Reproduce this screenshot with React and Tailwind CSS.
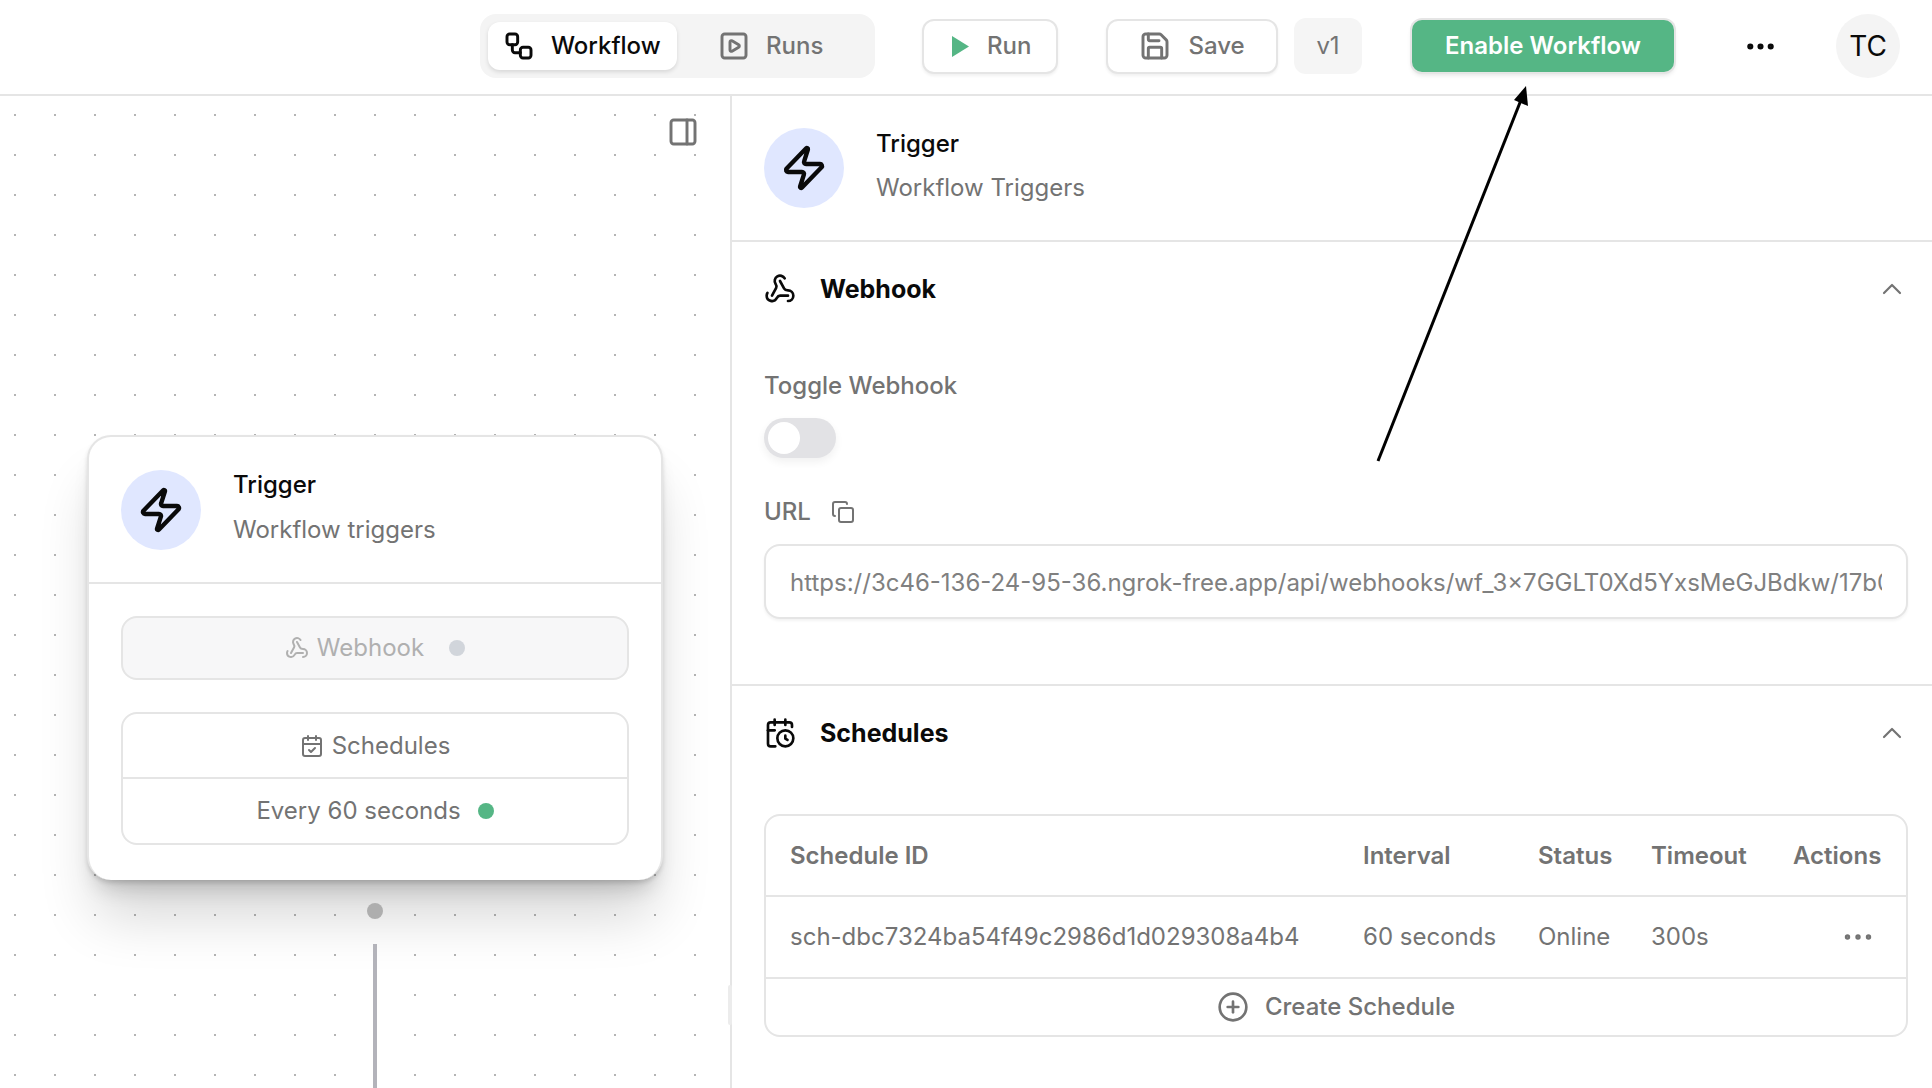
import React from 'react';
import {
  Workflow,
  SquarePlay,
  Save,
  Ellipsis,
  PanelRight,
  Zap,
  Webhook,
  ChevronUp,
  Copy,
  CalendarClock,
  CalendarCheck,
  CirclePlus,
} from 'lucide-react';

const webhookUrl = 'https://3c46-136-24-95-36.ngrok-free.app/api/webhooks/wf_3x7GGLT0Xd5YxsMeGJBdkw/17b0c94e2a7d4f18b6e3';

function Header() {
  return (
    <header className="h-[96px] shrink-0 border-b-2 border-[#e5e5e5] flex items-center justify-end pr-[32px] pb-[2px] text-[24px] font-medium">
      <div className="flex items-center h-[64px] w-[395px] rounded-[16px] bg-[#f4f4f4] px-[8px]">
        <div className="flex items-center h-[48px] w-[189px] pl-[15px] rounded-[12px] bg-white shadow-[0_2px_4px_rgba(0,0,0,0.12)] text-[#0a0a0a]">
          <Workflow size={32} strokeWidth={2.2} />
          <span className="ml-[16px]">Workflow</span>
        </div>
        <div className="flex items-center ml-[41px] text-[#737373]">
          <SquarePlay size={32} strokeWidth={2.2} />
          <span className="ml-[16px]">Runs</span>
        </div>
      </div>
      <button className="ml-[47px] flex items-center pl-[28px] h-[55px] w-[136px] rounded-[12px] border-2 border-[#e5e5e5] bg-white shadow-[0_2px_3px_rgba(0,0,0,0.06)] text-[#737373]">
        <svg width="17" height="21" viewBox="0 0 17 21" className="mr-[18px]">
          <path d="M0 0 L17 10.5 L0 21 Z" fill="#55b685" />
        </svg>
        Run
      </button>
      <button className="ml-[48px] flex items-center justify-center h-[55px] w-[172px] rounded-[12px] border-2 border-[#e5e5e5] bg-white shadow-[0_2px_3px_rgba(0,0,0,0.06)] text-[#737373]">
        <Save size={32} strokeWidth={2.2} className="mr-[17px]" />
        Save
      </button>
      <div className="ml-[16px] flex items-center justify-center h-[56px] w-[68px] rounded-[12px] bg-[#f5f5f5] text-[#737373] font-normal">
        v1
      </div>
      <button className="ml-[50px] flex items-center justify-center h-[52px] w-[262px] rounded-[10px] bg-[#55b685] text-white font-semibold shadow-[0_0_0_2px_#e5e5e5,0_3px_5px_rgba(0,0,0,0.12)]">
        Enable Workflow
      </button>
      <Ellipsis size={35} strokeWidth={2.2} className="ml-[69px] text-[#0a0a0a]" />
      <div className="ml-[58px] flex items-center justify-center w-[64px] h-[64px] rounded-full bg-[#f4f4f4] text-[28px] font-normal text-[#0a0a0a]">
        TC
      </div>
    </header>
  );
}

function TriggerCard() {
  return (
    <div className="absolute left-[87px] top-[339px] w-[576px] h-[445px] rounded-[24px] border-2 border-[#e5e5e5] border-b-0 bg-white shadow-[0_44px_56px_-8px_rgba(0,0,0,0.16),0_16px_22px_-10px_rgba(0,0,0,0.2),0_3px_4px_rgba(0,0,0,0.12)] text-[24px] text-[#737373]">
      <div className="flex items-center h-[147px] pl-[32px] border-b-2 border-[#e5e5e5]">
        <div className="w-[80px] h-[80px] rounded-full bg-[#e0e7ff] flex items-center justify-center text-[#0a0a0a]">
          <Zap size={48} strokeWidth={2.2} />
        </div>
        <div className="ml-[32px] pb-[4px]">
          <div className="leading-[32px] text-[#0a0a0a] font-medium">Trigger</div>
          <div className="leading-[32px] mt-[13px]">Workflow triggers</div>
        </div>
      </div>
      <div className="px-[32px] pt-[32px]">
        <div className="h-[64px] flex items-center justify-center rounded-[16px] border-2 border-[#e5e5e5] bg-[#f7f7f8] text-[#b0b0b0]">
          <Webhook size={24} strokeWidth={2} />
          <span className="ml-[8px]">Webhook</span>
          <span className="ml-[25px] w-[16px] h-[16px] rounded-full bg-[#d1d5db]" />
        </div>
        <div className="mt-[32px] rounded-[16px] border-2 border-[#e5e5e5]">
          <div className="h-[65px] flex items-center justify-center border-b-2 border-[#e5e5e5]">
            <CalendarCheck size={24} strokeWidth={2} />
            <span className="ml-[8px]">Schedules</span>
          </div>
          <div className="h-[64px] flex items-center justify-center">
            <span>Every 60 seconds</span>
            <span className="ml-[17px] w-[16px] h-[16px] rounded-full bg-[#55b685]" />
          </div>
        </div>
      </div>
    </div>
  );
}

function Canvas() {
  return (
    <div className="relative w-[732px] shrink-0 border-r-2 border-[#e5e5e5] bg-white bg-[radial-gradient(circle,#b4b4b4_1px,transparent_1.5px)] bg-[size:40px_40px] bg-[position:-5px_-1px]">
      <PanelRight size={32} strokeWidth={2.2} className="absolute left-[667px] top-[20px] text-[#737373]" />
      <TriggerCard />
      <div className="absolute left-[367px] top-[807px] w-[16px] h-[16px] rounded-full bg-[#aeaeae]" />
      <div className="absolute left-[373px] top-[848px] bottom-0 w-[4px] bg-[#b3b3ba]" />
      <div className="absolute left-[728px] top-[889px] w-[4px] h-[40px] rounded-full bg-[#ececec]" />
    </div>
  );
}

function SectionTitle({ icon: Icon, title }) {
  return (
    <div className="h-[94px] flex items-center text-[#0a0a0a]">
      <Icon size={32} strokeWidth={2} />
      <span className="ml-[24px] pt-[2px] text-[25px] font-bold">{title}</span>
      <ChevronUp size={32} strokeWidth={1.6} className="ml-auto text-[#737373]" />
    </div>
  );
}

function ScheduleTable() {
  const cols = 'grid grid-cols-[573px_175px_113px_142px_1fr] items-center pl-[24px]';
  return (
    <div className="h-[223px] rounded-[16px] border-2 border-[#e5e5e5] text-[24px] text-[#737373] flex flex-col">
      <div className={`${cols} h-[81px] border-b-2 border-[#e5e5e5] font-semibold`}>
        <span>Schedule ID</span>
        <span>Interval</span>
        <span>Status</span>
        <span>Timeout</span>
        <span>Actions</span>
      </div>
      <div className={`${cols} h-[82px] border-b-2 border-[#e5e5e5]`}>
        <span>sch-dbc7324ba54f49c2986d1d029308a4b4</span>
        <span>60 seconds</span>
        <span>Online</span>
        <span>300s</span>
        <span className="flex justify-end pr-[30px]">
          <Ellipsis size={36} strokeWidth={1.6} />
        </span>
      </div>
      <div className="flex-1 flex items-center justify-center font-medium">
        <CirclePlus size={32} strokeWidth={2} />
        <span className="ml-[16px]">Create Schedule</span>
      </div>
    </div>
  );
}

function Inspector() {
  return (
    <div className="flex-1 min-w-0 text-[24px] text-[#737373]">
      <div className="h-[146px] flex items-center pl-[32px] border-b-2 border-[#e5e5e5]">
        <div className="w-[80px] h-[80px] rounded-full bg-[#e0e7ff] flex items-center justify-center text-[#0a0a0a]">
          <Zap size={48} strokeWidth={2.2} />
        </div>
        <div className="ml-[32px] pb-[5px]">
          <div className="leading-[32px] text-[#0a0a0a] font-medium">Trigger</div>
          <div className="leading-[32px] mt-[12px]">Workflow Triggers</div>
        </div>
      </div>
      <div className="h-[444px] pl-[32px] pr-[24px] border-b-2 border-[#e5e5e5]">
        <SectionTitle icon={Webhook} title="Webhook" />
        <div className="mt-[34px] leading-[32px] font-medium">Toggle Webhook</div>
        <div className="mt-[16px] w-[72px] h-[40px] rounded-full bg-[#e2e2e5] p-[4px] shadow-[0_4px_8px_rgba(0,0,0,0.06)]">
          <div className="w-[32px] h-[32px] rounded-full bg-white" />
        </div>
        <div className="mt-[38px] flex items-center h-[32px] font-medium">
          URL
          <Copy size={24} strokeWidth={2} className="ml-[20px]" />
        </div>
        <input
          readOnly
          value={webhookUrl}
          className="mt-[16px] w-full h-[75px] rounded-[16px] border-2 border-[#e5e5e5] bg-white pl-[24px] pr-[24px] pt-[2px] text-[24px] text-[#808080] shadow-[0_2px_3px_rgba(0,0,0,0.05)] outline-none"
        />
      </div>
      <div className="pl-[32px] pr-[24px]">
        <SectionTitle icon={CalendarClock} title="Schedules" />
        <div className="mt-[34px]">
          <ScheduleTable />
        </div>
      </div>
    </div>
  );
}

export default function App() {
  return (
    <div className="relative w-full h-[1088px] overflow-hidden bg-white flex flex-col font-['Inter',sans-serif]">
      <Header />
      <div className="flex flex-1 min-h-0">
        <Canvas />
        <Inspector />
      </div>
      {/* Annotation arrow laid over the page */}
      <svg className="absolute left-0 top-0 pointer-events-none" width="1932" height="1088">
        <line x1="1378" y1="461" x2="1521" y2="100" stroke="#000" strokeWidth="3" />
        <path d="M1526 86 L1528 106 L1514 100 Z" fill="#000" />
      </svg>
    </div>
  );
}
